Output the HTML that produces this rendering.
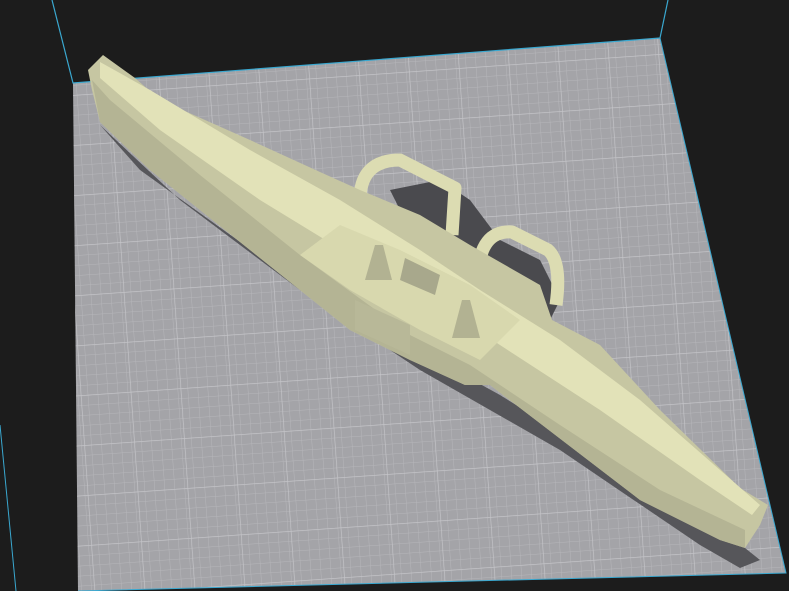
<!DOCTYPE html>
<html><head><style>html,body{margin:0;padding:0;background:#1c1c1c;overflow:hidden}svg{display:block}</style></head><body>
<svg width="789" height="591" viewBox="0 0 789 591" xmlns="http://www.w3.org/2000/svg">
<defs>
<pattern id="g" width="10" height="10" patternUnits="userSpaceOnUse" patternTransform="rotate(-4)">
<rect width="10" height="10" fill="#a4a4a8"/>
<path d="M0 0H10M0 0V10" stroke="#b6b6ba" stroke-width="1"/>
</pattern>
<pattern id="G" width="50" height="50" patternUnits="userSpaceOnUse" patternTransform="rotate(-4) translate(3,0)">
<path d="M0 0H50M0 0V50" stroke="#c6c6ca" stroke-width="1.3" fill="none"/>
</pattern>
</defs>
<rect width="789" height="591" fill="#1c1c1c"/>
<polygon points="73,83 660,38 786,573 78,591" fill="url(#g)"/>
<polygon points="73,83 660,38 786,573 78,591" fill="url(#G)"/>
<polyline points="52,0 73,83 660,38 668,0" fill="none" stroke="#3aa8d0" stroke-width="1.2"/>
<polyline points="660,38 786,573 78,591" fill="none" stroke="#3aa8d0" stroke-width="1"/>
<line x1="0" y1="425" x2="16" y2="591" stroke="#3aa8d0" stroke-width="1"/>
<polygon points="100,125 180,200 300,290 420,370 560,450 700,545 740,568 760,560 745,548 500,395 300,285 140,170" fill="#56565a"/>
<polygon points="390,190 440,180 470,200 500,240 540,260 560,300 545,330 480,310 440,270 410,230" fill="#4a4a4e"/>
<path d="M360,205 Q358,160 400,160 L455,188 L452,235" fill="none" stroke="#dcdcb2" stroke-width="13" stroke-linejoin="round"/>
<path d="M478,275 Q480,230 512,232 L548,250 Q562,262 556,305" fill="none" stroke="#dcdcb2" stroke-width="13" stroke-linejoin="round"/>
<polygon points="88,70 103,55 135,78 160,100 250,140 320,172 360,190 420,215 470,245 540,285 552,320 600,345 660,410 740,488 768,505 760,525 745,548 720,540 640,500 490,385 465,385 410,360 350,330 300,290 250,250 150,170 100,122 92,90" fill="#c6c6a2"/>
<polygon points="92,80 110,100 200,175 300,255 410,335 470,365 560,425 660,490 745,530 745,548 720,540 640,500 490,385 465,385 410,360 350,330 300,290 250,250 150,170 100,122" fill="#b4b494"/>
<polygon points="100,62 150,90 250,150 340,200 420,250 480,290 560,340 640,400 720,470 760,505 752,515 700,480 600,410 500,345 430,300 350,255 260,200 160,130 100,78" fill="#e2e2b8"/>
<polygon points="300,255 340,225 400,250 470,285 520,320 480,360 420,330 350,290" fill="#d8d8ae"/>
<polygon points="375,245 383,245 392,280 365,280" fill="#b2b292"/>
<polygon points="462,300 470,300 480,338 452,338" fill="#b2b292"/>
<polygon points="405,258 440,275 435,295 400,280" fill="#a8a88c"/>
<polygon points="355,300 410,325 410,355 355,330" fill="#b8b898"/>
</svg>
</body></html>
